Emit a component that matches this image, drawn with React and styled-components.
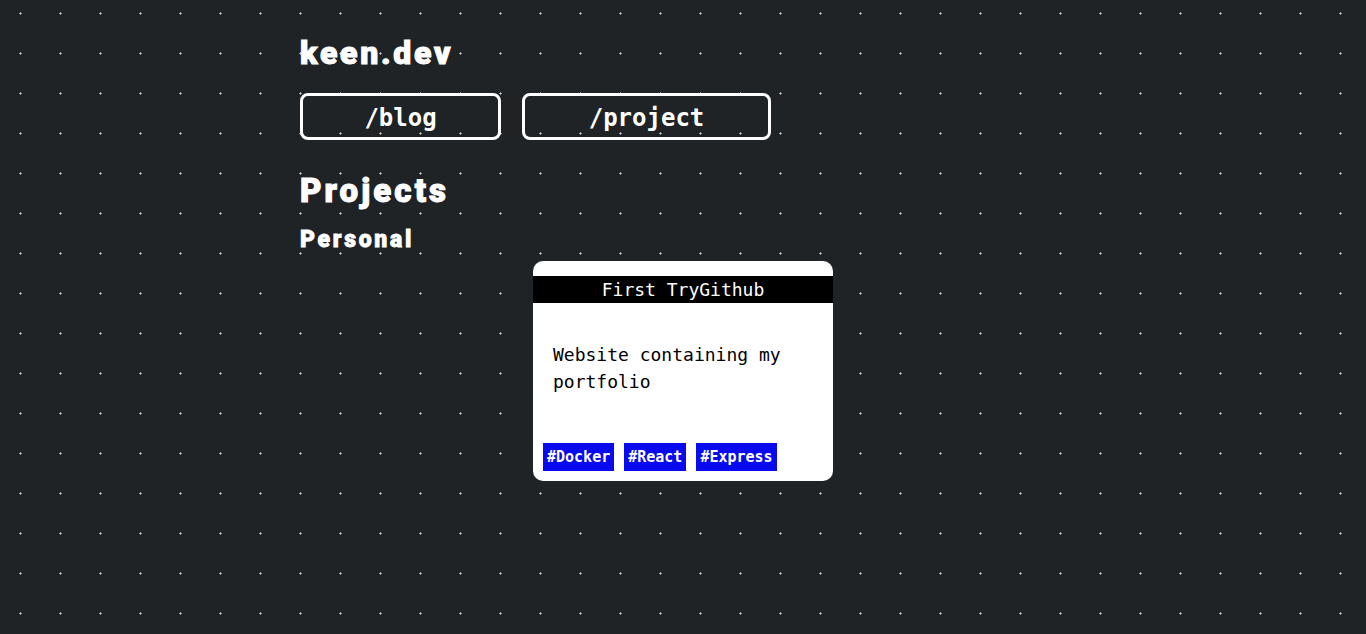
import React from "react"
import styled, { createGlobalStyle } from 'styled-components'

const GlobalStyle = createGlobalStyle`
  html, body {
    margin: 0;
    padding: 0;
  }
  body {
    min-height: 634px;
    background-color: #202325;
    background-image: radial-gradient(circle at 20.5px 20.5px, #c4c7c9 0.9px, transparent 1.3px);
    background-size: 40px 40px;
    background-position: 0 -7px;
    color: #fff;
  }
`;

const Container = styled.div`
  width: 766px;
  margin: 0 auto;
  padding-top: 33px;
`;

const Logo = styled.h1`
  margin: 0;
  font-family: Roboto, "Liberation Sans", sans-serif;
  font-weight: 900;
  font-size: 32px;
  line-height: 40px;
  letter-spacing: 2.7px;
  -webkit-text-stroke: 1px #fff;
`;

const Nav = styled.nav`
  display: flex;
  gap: 21px;
  margin-top: 20px;
`;

const NavButton = styled.a`
  display: flex;
  align-items: center;
  justify-content: center;
  box-sizing: border-box;
  width: ${p => p.$w}px;
  height: 47px;
  padding-top: 2px;
  border: 3px solid #fff;
  border-radius: 8px;
  color: #fff;
  text-decoration: none;
  font-family: "DejaVu Sans Mono", "Liberation Mono", monospace;
  font-weight: bold;
  font-size: 24px;
  cursor: pointer;
`;

const Heading = styled.h2`
  margin: 31px 0 0;
  font-family: Roboto, "Liberation Sans", sans-serif;
  font-weight: 900;
  font-size: 33px;
  line-height: 40px;
  letter-spacing: 3.1px;
  -webkit-text-stroke: 1px #fff;
`;

const SubHeading = styled.h3`
  margin: 15px 0 0;
  font-family: Roboto, "Liberation Sans", sans-serif;
  font-weight: 900;
  font-size: 23px;
  line-height: 28px;
  letter-spacing: 2.7px;
  -webkit-text-stroke: 0.8px #fff;
`;

const CardRow = styled.div`
  display: flex;
  justify-content: center;
  margin-top: 7px;
`;

const Card = styled.div`
  width: 300px;
  background: #fff;
  border-radius: 10px;
  padding: 15px 0 10px;
  font-family: "DejaVu Sans Mono", "Liberation Mono", monospace;
  color: #000;
`;

const CardTitle = styled.div`
  background: #000;
  color: #fff;
  height: 27px;
  line-height: 27px;
  text-align: center;
  font-size: 18px;
  font-weight: 500;
`;

const CardBody = styled.p`
  margin: 0;
  padding: 38px 20px 0;
  height: 102px;
  font-size: 18px;
  line-height: 27px;
`;

const Tags = styled.div`
  display: flex;
  gap: 10px;
  padding: 0 10px;
`;

const Tag = styled.span`
  background: #0a0aee;
  color: #fff;
  height: 28px;
  line-height: 28px;
  padding: 0 4px;
  font-size: 15px;
  font-weight: bold;
`;

const App = () => {
  return (
    <>
      <GlobalStyle />
      <Container>
        <Logo>keen.dev</Logo>
        <Nav>
          <NavButton $w={201}>/blog</NavButton>
          <NavButton $w={249}>/project</NavButton>
        </Nav>
        <Heading>Projects</Heading>
        <SubHeading>Personal</SubHeading>
        <CardRow>
          <Card>
            <CardTitle>First TryGithub</CardTitle>
            <CardBody>Website containing my portfolio</CardBody>
            <Tags>
              <Tag>#Docker</Tag>
              <Tag>#React</Tag>
              <Tag>#Express</Tag>
            </Tags>
          </Card>
        </CardRow>
      </Container>
    </>
  );
};

export default App;
